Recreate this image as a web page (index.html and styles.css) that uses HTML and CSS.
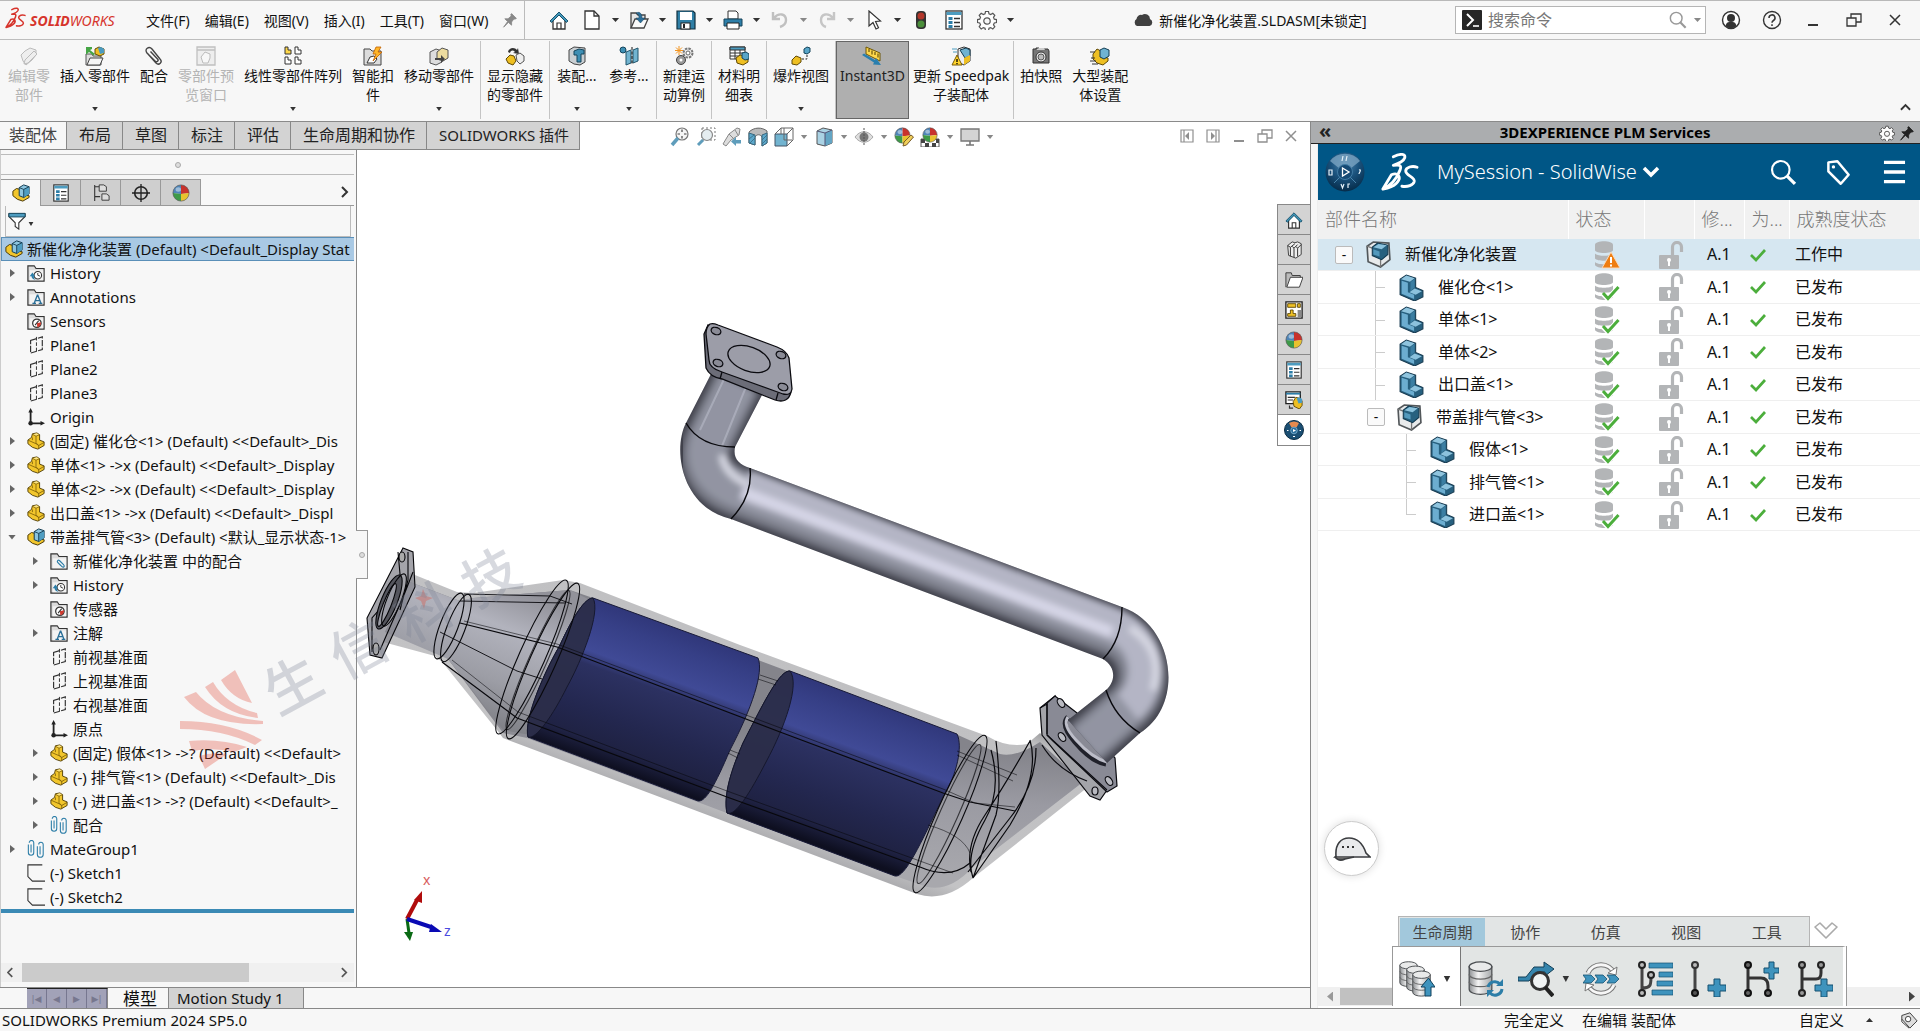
FILE: index.html
```html
<!DOCTYPE html>
<html lang="zh-CN">
<head>
<meta charset="utf-8">
<title>新催化净化装置.SLDASM - SOLIDWORKS</title>
<link rel="stylesheet" href="styles.css">
</head>
<body>
<svg class="defs" aria-hidden="true">
  <defs>
    <radialGradient id="orb" cx=".5" cy=".3" r=".7"><stop offset="0" stop-color="#4f86ae"/><stop offset=".5" stop-color="#1a527d"/><stop offset="1" stop-color="#062c4a"/></radialGradient>
    <linearGradient id="metal" x1="0" x2="1" y1="0" y2="0"><stop offset="0" stop-color="#8e9194"/><stop offset=".4" stop-color="#f4f4f4"/><stop offset="1" stop-color="#a5a8aa"/></linearGradient>
  </defs>
  <symbol id="home" viewBox="0 0 20 20"><path d="M4 10v9h12v-9l-6-6z" fill="#fff" stroke="#333" stroke-width="1.3"/><path d="M8 19v-6h4v6" fill="none" stroke="#333" stroke-width="1.2"/><path d="M1 11l9-9 9 9-1.600 1.400L10 5l-7.400 7.400z" fill="#4397b9" stroke="#0b4763" stroke-width=".9"/></symbol>
  <symbol id="new" viewBox="0 0 20 20"><path d="M3 1h9l5 5v13H3z" fill="#fff" stroke="#333" stroke-width="1.300"/><path d="M12 1v5h5" fill="none" stroke="#333" stroke-width="1.300"/></symbol>
  <symbol id="open" viewBox="0 0 20 20"><path d="M2 18V3h5l2 2h7v4" fill="#e6e6e6" stroke="#444" stroke-width="1.300"/><path d="M2 18L6 9h13l-4 9z" fill="#fafafa" stroke="#444" stroke-width="1.300"/><path d="M7 3c4-2 6 1 6 5h3l-4.500 5L7 8h3c0-3-1-4-3-5z" fill="#2c6e98" stroke="#17415c" stroke-width=".5"/></symbol>
  <symbol id="save" viewBox="0 0 20 20"><path d="M1 1h16l2 2v16H1z" fill="#2f7fa6" stroke="#12303f" stroke-width="1.200"/><rect x="4" y="2" width="12" height="8" fill="#fff"/><rect x="5" y="13" width="9" height="6" fill="#fff" stroke="#222"/><rect x="7" y="14" width="2" height="4" fill="#222"/></symbol>
  <symbol id="print" viewBox="0 0 20 20"><path d="M5 1h8l2 2v6H5z" fill="#fff" stroke="#333"/><path d="M1 9h18v7H1z" fill="#2d7ea8" stroke="#164258"/><path d="M4 13h12v6H4z" fill="#fff" stroke="#222"/></symbol>
  <symbol id="undo" viewBox="0 0 20 20"><path d="M3 2v7h7M4 8c5-6 12-4 12 2 0 4-3 6-6 7" fill="none" stroke="#c0c0c0" stroke-width="2.400"/></symbol>
  <symbol id="redo" viewBox="0 0 20 20"><path d="M17 2v7h-7M16 8c-5-6-12-4-12 2 0 4 2 6 5 7" fill="none" stroke="#c6c6c6" stroke-width="2.400"/></symbol>
  <symbol id="cursor" viewBox="0 0 20 20"><path d="M5 1v15l4-3.500 3 6.500 2.500-1.200-3-6.300 5-.5z" fill="#fff" stroke="#333" stroke-width="1.200"/></symbol>
  <symbol id="traffic" viewBox="0 0 20 20"><rect x="5" y="1" width="10" height="18" rx="4" fill="#333"/><circle cx="10" cy="6" r="3.500" fill="#b3372b"/><circle cx="10" cy="14" r="3.500" fill="#4b8f3b"/></symbol>
  <symbol id="list" viewBox="0 0 20 20"><rect x="2" y="1" width="16" height="18" fill="#fff" stroke="#333" stroke-width="1.300"/><path d="M2.500 2h15v3h-15z" fill="#4d9cc0"/><path d="M4.500 7h4v3h-4zM4.500 11h4v3h-4zM4.500 15h4v3h-4z" fill="#2d7ea8"/><path d="M10 8.500h6M10 12.500h6M10 16.500h6" stroke="#333" stroke-width="1.300"/></symbol>
  <symbol id="gear" viewBox="0 0 20 20"><path d="M8.500 1.500h3l.5 2.300 1.700.8 2.100-1.300 2 2.100-1.300 2 .8 1.800 2.200.4v2.900l-2.200.5-.8 1.800 1.300 2-2 2.100-2.100-1.300-1.700.7-.5 2.300h-3L8 18.300l-1.700-.7-2.100 1.300-2-2.100 1.300-2-.8-1.800-2.200-.5V9.600l2.200-.4.800-1.800-1.300-2 2-2.100 2.100 1.300L8 3.800z" fill="#fdfdfd" stroke="#555" stroke-width="1.200"/><circle cx="10" cy="11" r="3.200" fill="#f7f7f7" stroke="#555" stroke-width="1.200"/></symbol>
  <symbol id="cloud" viewBox="0 0 20 20"><path d="M4 16a4 4 0 0 1-.5-7A4.500 4.500 0 0 1 9 5a5 5 0 0 1 8 4 3.700 3.700 0 0 1-.5 7z" fill="#404040"/></symbol>
  <symbol id="cmd" viewBox="0 0 20 20"><rect width="20" height="20" rx="1" fill="#262626"/><path d="M5 4l6 6-6 6" fill="none" stroke="#fff" stroke-width="2"/><path d="M11 16h6" stroke="#fff" stroke-width="1.600"/></symbol>
  <symbol id="search" viewBox="0 0 20 20"><circle cx="8" cy="8" r="6.500" fill="none" stroke="currentColor" stroke-width="1.600"/><path d="M12.500 12.500L18.500 18.500" stroke="currentColor" stroke-width="2.400"/></symbol>
  <symbol id="user" viewBox="0 0 20 20"><circle cx="10" cy="10" r="8.500" fill="#fff" stroke="#333" stroke-width="1.400"/><circle cx="10" cy="8" r="4" fill="#333"/><path d="M4.500 16c1-4 2.500-4 5.500-4s4.500 0 5.500 4c-3 3-8 3-11 0z" fill="#333"/></symbol>
  <symbol id="help" viewBox="0 0 20 20"><circle cx="10" cy="10" r="8.500" fill="none" stroke="#333" stroke-width="1.400"/><path d="M7 8a3 3 0 1 1 4.500 2.500c-1 .6-1.500 1-1.500 2.300M10 14.300v1.800" fill="none" stroke="#333" stroke-width="1.500"/></symbol>
  <symbol id="min" viewBox="0 0 20 20"><path d="M5 15h10" stroke="currentColor" stroke-width="2"/></symbol>
  <symbol id="restore" viewBox="0 0 20 20"><path d="M3 8h9v8H3zM7 8V4h10v8h-5" fill="none" stroke="currentColor" stroke-width="1.300"/></symbol>
  <symbol id="close" viewBox="0 0 20 20"><path d="M5 5l10 10M15 5L5 15" stroke="currentColor" stroke-width="1.500"/></symbol>
  <symbol id="pin" viewBox="0 0 20 20"><path d="M12 2l6 6-2 1-1-.5-3 4v4L8 13l-6 6 5-7-3.500-3.500h4l4-3.500L11 3z" fill="currentColor" stroke="currentColor"/></symbol>

  <symbol id="part" viewBox="0 0 20 20"><path d="M1 9l4-3 1-4 5-1 3 2v6l5 2v4l-7 4-6-2-5-4z" fill="#f2c62c" stroke="#4c3a05" stroke-width="1"/><path d="M6 2.500l4 2 4-1.500M10 4.500V12l3 3 6-3.500M1 9l9 4 3 2v4M6 6v3" fill="none" stroke="#7a5d07" stroke-width=".9"/><path d="M7 2.500l4-1 2 1.500-3 1z" fill="#fbe486"/></symbol>
  <symbol id="asm" viewBox="0 0 20 20"><path d="M1 8l4-3 4 1v6l10 1v2l-7 4-6-2-5-4z" fill="#f2c62c" stroke="#4c3a05" stroke-width="1.100"/><path d="M8 4l5-3 6 2v8l-6 4-5-2z" fill="#8cc5df" stroke="#143d52" stroke-width="1.100"/><path d="M13 6l6-3v8l-6 4z" fill="#4f9dc1"/><path d="M8 4l5 2v9M13 6l6-3" fill="none" stroke="#143d52" stroke-width="1"/></symbol>
  <symbol id="ghost" viewBox="0 0 20 20"><g fill="#eee" stroke="#bbb"><path d="M2 9l4-4 5-3 6 2v5l-4 5-6 5-3-4z"/><path d="M6 14l9-9 3 3-9 9-4 1z"/></g></symbol>
  <symbol id="insert" viewBox="0 0 20 20"><path d="M1 19V8h6l1 2h8v9z" fill="#ddd" stroke="#555"/><path d="M2 19l3-7h13l-3 7z" fill="#f5f5f5" stroke="#444"/><path d="M1 1h6v2L5 4l5 4-1.500 1.500L4 6 2 8H1z" fill="#45a545"/><path d="M10 3l4-2 5 2v5l-4 2-5-2z" fill="#eebf22" stroke="#614a06"/><path d="M13 2l3-1 3 2v4l-4 1z" fill="#4a9bc1"/></symbol>
  <symbol id="clip" viewBox="0 0 20 20"><path d="M4 8l8 9c3 3 7-1 4-4L8 3C5-.5 0 3 3 7l8 8c2 2 4-.5 2.500-2L6.500 5.500" fill="none" stroke="#444" stroke-width="1.400"/></symbol>
  <symbol id="preview" viewBox="0 0 20 20"><path d="M1 1h18v18H1zM1 4h18" fill="#eee" stroke="#c0c0c0" stroke-width="1.300"/><path d="M5 11l4-5 5 2v4l-2 5H7z" fill="#f7f7f7" stroke="#bbb"/></symbol>
  <symbol id="pattern" viewBox="0 0 20 20"><path d="M2 1h3v3h3v4H2z" fill="#ffd84a" stroke="#333"/><path d="M12 1h3v3h3v4h-6zM2 11h3v3h3v4H2zM12 11h3v3h3v4h-6z" fill="#fff" stroke="#333"/></symbol>
  <symbol id="smart" viewBox="0 0 20 20"><path d="M1 3h6l2 2h9v14H1z" fill="#dcdcdc" stroke="#444"/><path d="M4 17l3-6 4-1 3 3-3 4z" fill="#fff" stroke="#333"/><path d="M13 1h5l-3 5h4l-9 9 3-7h-3z" fill="#ffb629" stroke="#c05f00" stroke-width=".8"/></symbol>
  <symbol id="move" viewBox="0 0 20 20"><path d="M1 6l6-3 6 2v11l-6 3-6-2z" fill="#ddd" stroke="#555"/><path d="M8 6l5-4 6 2v8l-5 3-6-2z" fill="#eddc9f" stroke="#555"/><path d="M6 12h6V9l4 4-4 4v-3H6z" fill="#444"/></symbol>
  <symbol id="showhide" viewBox="0 0 20 20"><path d="M3 6c1-5 7-5 9-2l1-2 1 6-6-1 2-1c-2-2-4-2-5 1z" fill="#333"/><path d="M1 13l4-4 4 1 2 5-3 4-5-2z" fill="#eebf22" stroke="#614a06"/><path d="M11 9l4-2 4 3v5l-4 3-3-3z" fill="#eee" stroke="#555"/></symbol>
  <symbol id="asmfeat" viewBox="0 0 20 20"><path d="M2 4l5-3 11 1v14l-5 3-6-1-5-3z" fill="#c9cfd3" stroke="#444"/><path d="M7 5l5-2 5 1v4h-3v8h-4V9H7z" fill="#3e8fb4" stroke="#15455c"/></symbol>
  <symbol id="refgeo" viewBox="0 0 20 20"><circle cx="4" cy="4" r="3" fill="#3e8fb4" stroke="#15455c"/><path d="M7 6l5-2v13l-5 2zM14 4l5-2v13l-5 2z" fill="#72b4d0" stroke="#20546b"/><path d="M13 1v18" stroke="#111" stroke-dasharray="3 1.500"/></symbol>
  <symbol id="motion" viewBox="0 0 20 20"><path d="M5 0v9M1 4.500h8M2 1.500l6 6M8 1.500l-6 6" stroke="#f3941e"/><circle cx="14" cy="7" r="4.500" fill="#eee" stroke="#777" stroke-width="2" stroke-dasharray="2.500 1"/><circle cx="14" cy="7" r="2" fill="#fff" stroke="#666"/><circle cx="7" cy="14" r="4.500" fill="#999" stroke="#444"/><circle cx="7" cy="14" r="1.500" fill="#fff"/></symbol>
  <symbol id="bom" viewBox="0 0 20 20"><path d="M1 1h15v12H1z" fill="#fff" stroke="#333"/><path d="M1 1h15v3H1z" fill="#4d9cc0" stroke="#333"/><path d="M1 7h15M1 10h15M6 4v9M11 4v9" stroke="#333"/><path d="M7 12l4-3 8 1v6l-5 3-6-2z" fill="#eebf22" stroke="#614a06"/><path d="M13 7l4-1 3 2v5l-4 1-3-2z" fill="#58a5c8" stroke="#15455c"/></symbol>
  <symbol id="explode" viewBox="0 0 20 20"><path d="M1 14l4-4 5 2v4l-4 3-5-1z" fill="#eebf22" stroke="#614a06"/><path d="M13 3l3-2 3 1v4l-3 2-3-1z" fill="#58a5c8" stroke="#15455c"/><path d="M16 9v4h-5" fill="none" stroke="#222" stroke-dasharray="2 1.500"/></symbol>
  <symbol id="instant" viewBox="0 0 20 20"><path d="M4 1l14 6v8L4 8z" fill="#ffd84a" stroke="#6d5708"/><path d="M7 3v3M10 4.500v4M13 6v3M16 7.500v4" stroke="#4a3a00"/><path d="M0 9l2-1.500 11 6.500 1-2 5 7-8-.5 1-2z" fill="#2a7fae"/></symbol>
  <symbol id="speedpak" viewBox="0 0 20 20"><path d="M7 3l6-2 6 2v12l-6 4-6-3z" fill="#eee" stroke="#333"/><path d="M9 4l6-2 4 2v6l-5 2z" fill="#6fb3d2" stroke="#143d52"/><path d="M13 12l6-3v6l-6 4z" fill="#eebf22"/><path d="M1 19l5-10 5 10z" fill="#ffd42c" stroke="#7a5d07"/><path d="M6 13v3M6 17v1.300" stroke="#000" stroke-width="1.300"/><path d="M1 3h5M2 6h4" stroke="#4d9cc0"/></symbol>
  <symbol id="camera" viewBox="0 0 20 20"><path d="M2 3h3V2h3v1h9l1 2v12H2z" fill="#777" stroke="#333"/><path d="M6 3l2-1h5l1 2H6z" fill="#ccc"/><circle cx="10" cy="11" r="5" fill="#eee" stroke="#333"/><circle cx="10" cy="11" r="3" fill="#bbb" stroke="#555"/></symbol>
  <symbol id="large" viewBox="0 0 20 20"><path d="M3 8l4-5 4 2v6l7 1v3l-5 4-6-2-4-4z" fill="#eebf22" stroke="#614a06"/><path d="M10 4l4-2 5 2v6l-5 3-4-2z" fill="#6fb3d2" stroke="#143d52"/><path d="M0 6h5M1 12h4M0 15h6M2 18h6" stroke="#333"/></symbol>

  <symbol id="zoomfit" viewBox="0 0 20 20"><circle cx="12" cy="7" r="6" fill="#f5f5f5" stroke="#777" stroke-width="1.200"/><path d="M12 2.500v2.500M12 9v2.500M7.500 7H10M14 7h2.500" stroke="#444" stroke-width="1.200"/><path d="M8 11l-6 7" stroke="#5f9dbb" stroke-width="3.500"/></symbol>
  <symbol id="zoomarea" viewBox="0 0 20 20"><rect x="6" y="1" width="13" height="12" fill="none" stroke="#777" stroke-dasharray="2 2"/><circle cx="11" cy="8" r="5.500" fill="#e5edf0" stroke="#888" stroke-width="1.200"/><path d="M7 13l-5 5" stroke="#5f9dbb" stroke-width="3"/></symbol>
  <symbol id="prev" viewBox="0 0 20 20"><path d="M1 17l6-10 8-6 3 1-1 6-8 5-5 6z" fill="#ddd" stroke="#888"/><path d="M7 7l4 4M13 3l3 5" stroke="#888"/><path d="M19 16.500h-5V19l-5-4.500 5-4.500v3h5z" fill="#5f9dbb"/></symbol>
  <symbol id="section" viewBox="0 0 20 20"><path d="M1 5c5-5 13-5 18-1v12l-5 3v-9c-2-3-5-3-7 0v8l-6-2z" fill="#bbb" stroke="#666"/><path d="M1 6l6 2v10l-6-2zM14 8l5-2v10l-5 3z" fill="#5da9cc" stroke="#39687f"/><path d="M1 12l5-4M2 16l5-5M14 13l5-5M14 17l5-5" stroke="#39687f" stroke-width=".8"/></symbol>
  <symbol id="orient" viewBox="0 0 20 20"><path d="M1 7h12v12H1z" fill="#72b4d0" stroke="#456"/><path d="M1 7l6-6h12v12l-6 6M13 7l6-6M10 1v12h8M7 1v6" fill="none" stroke="#666"/></symbol>
  <symbol id="cube" viewBox="0 0 20 20"><path d="M3 4l6-3 9 2v13l-7 3-8-2z" fill="#aad2e4" stroke="#555"/><path d="M11 6l7-3v13l-7 3z" fill="#63a5c4"/><path d="M3 4l8 2v13M11 6l7-3" fill="none" stroke="#557"/></symbol>
  <symbol id="eye" viewBox="0 0 20 20"><path d="M1 10c5-7 13-7 18 0-5 7-13 7-18 0z" fill="#ddd" stroke="#aaa"/><circle cx="10" cy="10" r="4.500" fill="#777"/><path d="M10 1v18" stroke="#555" stroke-dasharray="2 1"/></symbol>
  <symbol id="ball" viewBox="0 0 20 20"><g stroke="none"><path d="M10 1a9 9 0 0 0-9 9l9 1z" fill="#4e85b8"/><path d="M10 1a9 9 0 0 1 9 9l-9 1z" fill="#c8322c"/><path d="M1 10a9 9 0 0 0 9 9v-8z" fill="#3d9a48"/><path d="M19 10a9 9 0 0 1-9 9v-8z" fill="#e8c22e"/></g><circle cx="10" cy="10" r="9" fill="none" stroke="#555" stroke-width=".7"/><ellipse cx="7" cy="6" rx="3" ry="2.500" fill="#fff" opacity=".45"/></symbol>
  <symbol id="ballpen" viewBox="0 0 20 20"><use href="#ball" width="17" height="17"/><path d="M9 19l1-4 7-7 2.500 2-7 8z" fill="#efce5a" stroke="#7a5d2a"/></symbol>
  <symbol id="scene" viewBox="0 0 20 20"><path d="M1 12h18v8H1z" fill="#fff" stroke="#555"/><path d="M1 12h4v4H1zM16 12h3v4h-3zM5 16h4v4H5zM12 16h4v4h-4z" fill="#444"/><use href="#ball" x="2" width="16" height="16"/></symbol>
  <symbol id="monitor" viewBox="0 0 20 20"><path d="M1 2h18v12H1z" fill="#d4d4d4" stroke="#777" stroke-width="1.300"/><path d="M10 14v4M6 18h8" stroke="#777" stroke-width="1.600"/></symbol>
  <symbol id="dockl" viewBox="0 0 20 20"><path d="M4 4h12v12H4zM7 4v12" fill="none" stroke="currentColor" stroke-width="1.200"/><path d="M12 6l-4 4 4 4z" fill="currentColor"/></symbol>
  <symbol id="dockr" viewBox="0 0 20 20"><path d="M4 4h12v12H4zM13 4v12" fill="none" stroke="currentColor" stroke-width="1.200"/><path d="M8 6l4 4-4 4z" fill="currentColor"/></symbol>

  <symbol id="fold" viewBox="0 0 20 20"><path d="M1 19V2h7l2 3h9v14z" fill="#dcdcdc" stroke="#333" stroke-width="1.300"/><path d="M3 7h15v11H3z" fill="#f3f3f3"/></symbol>
  <symbol id="history" viewBox="0 0 20 20"><use href="#fold"/><circle cx="12" cy="12.500" r="4.200" fill="#fff" stroke="#333" stroke-width="1.200"/><path d="M12 10v2.500l2.500 1" fill="none" stroke="#333"/><path d="M3 13.500l3-4 3 4H7.500c0 2 1 3 2.500 4-3 0-5-2-5-4z" fill="#2d7ea8"/></symbol>
  <symbol id="annot" viewBox="0 0 20 20"><use href="#fold"/><path d="M6 17h4M13 17h4M8 17l3.500-9h.5l3.500 9M9 14h5.500" fill="none" stroke="#2a6f98" stroke-width="1.500"/></symbol>
  <symbol id="sensor" viewBox="0 0 20 20"><use href="#fold"/><circle cx="11" cy="12.500" r="4.700" fill="#fff" stroke="#333" stroke-width="1.400"/><path d="M11 12.500l4.500-1a4.700 4.700 0 0 1-4 5.500z" fill="#d0392e"/><path d="M9 14.500l4-5" stroke="#333" stroke-width="1.200"/></symbol>
  <symbol id="matefold" viewBox="0 0 20 20"><use href="#fold"/><path d="M8 11l5 5c2 2 4 0 2-2l-4-4c-2-2-4 0-2 2l3 3" fill="none" stroke="#2d7ea8" stroke-width="1.300"/></symbol>
  <symbol id="plane" viewBox="0 0 20 20"><path d="M4 5l13-4v14L4 19z" fill="none" stroke="#333" stroke-width="1.300" stroke-dasharray="7 1.500"/><path d="M10.500 1v18" stroke="#333" stroke-width="1.100" stroke-dasharray="4 2"/></symbol>
  <symbol id="origin" viewBox="0 0 20 20"><path d="M4 3v14h12" fill="none" stroke="#222" stroke-width="2"/><path d="M1.500 5L4 0l2.500 5zM15 14.500l5 2.500-5 2.500z" fill="#222"/><circle cx="4" cy="17" r="2.500" fill="#222"/></symbol>
  <symbol id="mates" viewBox="0 0 20 20"><g fill="none" stroke="#2d7ea8" stroke-width="1.200"><path d="M1.500 5v9a3 3 0 0 0 6 0V3a2.500 2.500 0 0 0-5 0M4.500 5v9"/><path d="M11.500 7v9a3 3 0 0 0 6.500 0V5a2.500 2.500 0 0 0-5 0M14.500 7v9"/></g></symbol>
  <symbol id="sketch" viewBox="0 0 20 20"><path d="M17 1H1v13l5 5h14" fill="none" stroke="#333" stroke-width="1.200"/></symbol>
  <symbol id="config" viewBox="0 0 20 20"><path d="M3 1v18M3 3h6M3 14h6" stroke="#333" stroke-width="1.200"/><path d="M8 1h5l3 2v5H8zM11 11h5l3 2v5h-8z" fill="#ddd" stroke="#333"/></symbol>
  <symbol id="target" viewBox="0 0 20 20"><circle cx="10" cy="10" r="7" fill="none" stroke="#222" stroke-width="1.800"/><path d="M10 0v20M0 10h20" stroke="#222" stroke-width="1.500"/></symbol>
  <symbol id="funnel" viewBox="0 0 20 20"><path d="M1 2h18v3l-7 7v7l-4-3v-4L1 5z" fill="#fff" stroke="#333" stroke-width="1.200"/><path d="M1 1.500h18v4H1z" fill="#4d9cc0" stroke="#14465c"/></symbol>

  <symbol id="books" viewBox="0 0 20 20"><path d="M3 5l5-4 3 1 3-1 4 2v12l-6 4-8-3z" fill="#eee" stroke="#333"/><path d="M3 5l3 2v10M6 7l5-4M8 6l2 2v10M10 8l4-4M12 6l2 2v9M14 8l4-4" fill="none" stroke="#333" stroke-width="1.100"/></symbol>
  <symbol id="folder" viewBox="0 0 20 20"><path d="M1 18V2h6l1 3h9v3" fill="#bbb" stroke="#333"/><path d="M2 18L6 7h14l-4 11z" fill="#fff" stroke="#333"/></symbol>
  <symbol id="palette" viewBox="0 0 20 20"><path d="M1 1h18v18H1z" fill="#fff" stroke="#222" stroke-width="1.500"/><path d="M3 3h9v4H3zM14 3h3v4h-3zM3 17v-3h3v-4h3v4h3v3z" fill="#f1c327" stroke="#5a4506"/><path d="M14 10h4v8h-4z" fill="#888"/></symbol>
  <symbol id="custom" viewBox="0 0 20 20"><path d="M1 1h16v13H1z" fill="#fff" stroke="#222" stroke-width="1.500"/><path d="M1 3h16" stroke="#2d7ea8" stroke-width="2"/><path d="M3 7h8M3 10h6M5 16v3h4" stroke="#333" fill="none" stroke-width="1.300"/><path d="M9 12l3-5 4 1 3 3v5l-3 4-6-3z" fill="#eebf22" stroke="#614a06"/><path d="M13 8l3-1 3 2v4l-4 1z" fill="#4a9bc1"/></symbol>
  <symbol id="compass" viewBox="0 0 40 40"><circle cx="20" cy="20" r="19.500" fill="url(#orb)"/><path d="M5 9A19 19 0 0 1 35 9L25 17q-5-4-10 0z" fill="#7ba4c2" opacity=".8"/><path d="M9 31l6-6M31 31l-6-6" stroke="#4a86ad"/><circle cx="20" cy="20" r="7.500" fill="#164a74" stroke="#3f7aa3"/><path d="M17.500 16l6.500 4-6.500 4z" fill="none" stroke="#fff" stroke-width="1.300"/><path d="M18 4l-1 5M22 4l-1 5M34 18c3-1 0 3 0 4M4 18h3v5H4zM16 32l1.500 4 1.500-4M23 36v-4h2" fill="none" stroke="#e4f0f8" stroke-width="1.200"/></symbol>
  <symbol id="compass-hot" viewBox="0 0 20 20"><circle cx="10" cy="10" r="9.500" fill="#1b4f73" stroke="#0a2c44"/><path d="M5 3q5-3 10 0l-2.500 4.500q-2.500-1.500-5 0z" fill="#e58a4e"/><circle cx="10" cy="10.500" r="3.300" fill="#2c6f9c" stroke="#8fc0dc" stroke-width=".7"/><path d="M9 9l3 1.500L9 12z" fill="#fff"/><path d="M3 10.500h1.500M15.500 10.500H17M9 16.500h2" stroke="#fff"/></symbol>
  <symbol id="ds" viewBox="0 0 40 40"><g fill="none" stroke="currentColor" stroke-width="3" stroke-linejoin="round" stroke-linecap="round"><path d="M13 4c8-4 13-3 12 1-1 3-6 6-12 8 7-1 9 0 7 5-3 8-9 16-18 20l9-15c6-3 12 2 5 9-4 4-9 5-14 6"/><path d="M38 15c-5-2-12 0-12 4 0 5 10 6 9 11-1 4-7 6-13 5"/></g></symbol>
  <symbol id="tag" viewBox="0 0 24 24"><path d="M3 3l8-1 10 12-7 8L3 11z" fill="none" stroke="#fff" stroke-width="2.200" stroke-linejoin="round"/><circle cx="7.500" cy="7" r="1.500" fill="#fff"/></symbol>
  <symbol id="part3d" viewBox="0 0 24 26"><path d="M1 5l6-4 9 3v9l7 3v6l-8 4-14-6z" fill="#27607f" stroke="#16394f"/><path d="M2 5l5-3.500 8 2.700-4.500 3.300z" fill="#8fc4de"/><path d="M11 8l4-3.500V13l-4 3.500z" fill="#3b7ea2"/><path d="M2.500 6.500l6 2v9l6 2.500v4L2.500 19z" fill="#6cadd0"/><path d="M10 17.500l5-3.500 7 2.500-6 3.500z" fill="#8cc2dd"/></symbol>
  <symbol id="asm3d" viewBox="0 0 24 26"><path d="M1 5l6-4 15 1 1 16-9 7-12-5z" fill="#e8eaeb" stroke="#52575a" stroke-width="1.600"/><path d="M1 5l13 5v15" fill="none" stroke="#777" stroke-width="1.200"/><path d="M6 6l5-4 10 2v9l-6 5-9-4z" fill="#27617f" stroke="#123a50"/><path d="M7 6l5-3 8 1-5 4z" fill="#8cc3de"/><path d="M7 8l6 2v5l-6-2z" fill="#5399bc"/></symbol>
  <symbol id="db" viewBox="0 0 26 28"><path d="M1 4c0-5 18-5 18 0v5c0 4-18 4-18 0zM1 12.500c2 3 16 3 18 0v5c-2 3-16 3-18 0zM1 21c2 3 16 3 18 0v3c-2 4-16 4-18 0z" fill="#b3b5b7"/></symbol>
  <symbol id="dbok" viewBox="0 0 26 28"><use href="#db"/><path d="M9 21l5 5L24 14" fill="none" stroke="#fff" stroke-width="5"/><path d="M9 20l5 5.500L24.500 14" fill="none" stroke="#4cae3c" stroke-width="3"/></symbol>
  <symbol id="dbwarn" viewBox="0 0 26 28"><use href="#db"/><path d="M17 11l9 16H8z" fill="#ee7d11" stroke="#f7dcc0"/><path d="M17 16v6M17 23.500v2" stroke="#fff" stroke-width="2"/></symbol>
  <symbol id="lock" viewBox="0 0 26 28"><path d="M14.500 14V6a4.500 4.500 0 0 1 9 0v5" fill="none" stroke="#b3b5b7" stroke-width="3.200"/><rect x="1" y="14" width="20" height="14" rx="1" fill="#b3b5b7"/><circle cx="11" cy="19" r="2" fill="#fff"/><path d="M11 19v6" stroke="#fff" stroke-width="2"/></symbol>
  <symbol id="check" viewBox="0 0 16 14"><path d="M1 7l5 5L15 2" fill="none" stroke="#4cae3c" stroke-width="2.700"/></symbol>

  <symbol id="cyl" viewBox="0 0 26 36"><path d="M1 6v24c0 7 24 7 24 0V6z" fill="url(#metal)" stroke="#4a4d50" stroke-width="1.300"/><ellipse cx="13" cy="6" rx="12" ry="5" fill="#e9eaea" stroke="#4a4d50" stroke-width="1.300"/><path d="M1 14c0 7 24 7 24 0M1 22c0 7 24 7 24 0" fill="none" stroke="#666" stroke-width="1.300"/></symbol>
  <symbol id="t-save" viewBox="0 0 36 36"><use href="#cyl" x="0" y="0" width="19" height="26"/><use href="#cyl" x="7" y="4" width="19" height="27"/><use href="#cyl" x="13" y="9" width="19" height="27"/><path d="M26 35V26h-4l7.500-9 6.500 9h-4v9z" fill="#3e93bd" stroke="#10415c"/></symbol>
  <symbol id="t-refresh" viewBox="0 0 36 36"><use href="#cyl" x="0" y="0" width="25" height="34"/><path d="M20 26a7 7 0 0 1 12-3M34 28a7 7 0 0 1-12 4" fill="none" stroke="#2d7ea8" stroke-width="3"/><path d="M35 18v7h-7zM19 36v-7h7z" fill="#2d7ea8"/></symbol>
  <symbol id="t-find" viewBox="0 0 36 36"><path d="M0 16h8l8-10h10V1l10 7-9 7v-4h-8l-8 9H0z" fill="#3585ad" stroke="#123f57"/><circle cx="22" cy="20" r="8.500" fill="#f0f3f3" stroke="#333" stroke-width="3"/><path d="M27 26l8 9" stroke="#222" stroke-width="4"/></symbol>
  <symbol id="t-cycle" viewBox="0 0 36 36"><g fill="none" stroke="#777" stroke-width="5"><path d="M5 12a14 13 0 0 1 26 0M31 24a14 13 0 0 1-26 0"/></g><g fill="none" stroke="#f7f7f7" stroke-width="3"><path d="M5 12a14 13 0 0 1 26 0M31 24a14 13 0 0 1-26 0"/></g><path d="M34 6l-1 8-8-2zM2 30l1-8 8 2z" fill="#fff" stroke="#777"/><path d="M0 14h8l4 4-4 4H0l3-4zM12 14h8l4 4-4 4h-8l3-4zM24 14h8l4 4-4 4h-8l3-4z" fill="#3e93bd" stroke="#155070" stroke-width=".8"/></symbol>
  <symbol id="t-tree" viewBox="0 0 36 36"><path d="M5 3v30M5 27c9 0 9-3 9-12" fill="none" stroke="#444" stroke-width="3"/><g fill="#bbb" stroke="#222" stroke-width="2"><circle cx="5" cy="4" r="3"/><circle cx="5" cy="32" r="3"/><circle cx="14" cy="14" r="3"/></g><path d="M12 2h24v5H12zM22 11h14v5H22zM20 20h16v5H20zM15 29h21v5H15z" fill="#3e93bd" stroke="#155070" stroke-width=".7"/></symbol>
  <symbol id="t-rev" viewBox="0 0 36 36"><path d="M5 4v28" stroke="#444" stroke-width="3"/><circle cx="5" cy="4" r="3" fill="#bbb" stroke="#333" stroke-width="2"/><circle cx="5" cy="32" r="3" fill="#555" stroke="#111" stroke-width="2"/><path d="M24 18h6v6h6v6h-6v6h-6v-6h-6v-6h6z" fill="#3e93bd" stroke="#155070"/></symbol>
  <symbol id="t-br1" viewBox="0 0 36 36"><path d="M5 4v28M5 17h13q7 0 7 8v7" fill="none" stroke="#333" stroke-width="3"/><g fill="#666" stroke="#111" stroke-width="2"><circle cx="5" cy="4" r="3"/><circle cx="5" cy="32" r="3"/><circle cx="25" cy="32" r="3"/></g><path d="M26 1h5v6h5v5h-5v6h-5v-6h-5V7h5z" fill="#3e93bd" stroke="#155070"/></symbol>
  <symbol id="t-br2" viewBox="0 0 36 36"><path d="M5 4v28M5 18h14q5 0 5-6V4" fill="none" stroke="#333" stroke-width="3"/><g fill="#999" stroke="#222" stroke-width="2"><circle cx="5" cy="4" r="3"/><circle cx="5" cy="32" r="3"/><circle cx="24" cy="4" r="3"/></g><path d="M24 18h6v6h6v6h-6v6h-6v-6h-6v-6h6z" fill="#3e93bd" stroke="#155070"/></symbol>
  <symbol id="tags" viewBox="0 0 20 20"><path d="M2 5l9-3 8 9-8 8L2 9z" fill="#ddd" stroke="#333"/><circle cx="9" cy="9" r="3" fill="#fff" stroke="#333"/><path d="M2 9v3l8 7" fill="none" stroke="#333"/></symbol>
</svg>

<header class="titlebar">
  <div class="brand"><svg class="ds-logo"><use href="#ds"/></svg><span class="wordmark"><b>SOLID</b>WORKS</span></div>
  <nav class="menus">
    <button>文件(F)</button><button>编辑(E)</button><button>视图(V)</button><button>插入(I)</button><button>工具(T)</button><button>窗口(W)</button>
    <svg class="ico pin"><use href="#pin"/></svg>
  </nav>
  <div class="quick">
    <svg class="ico wide"><use href="#home"/></svg>
    <svg class="ico"><use href="#new"/></svg><i class="caret"></i>
    <svg class="ico"><use href="#open"/></svg><i class="caret"></i>
    <svg class="ico"><use href="#save"/></svg><i class="caret"></i>
    <svg class="ico"><use href="#print"/></svg><i class="caret"></i>
    <svg class="ico"><use href="#undo"/></svg><i class="caret dim"></i>
    <svg class="ico"><use href="#redo"/></svg><i class="caret dim"></i>
    <svg class="ico"><use href="#cursor"/></svg><i class="caret"></i>
    <svg class="ico wide"><use href="#traffic"/></svg>
    <svg class="ico wide"><use href="#list"/></svg>
    <svg class="ico"><use href="#gear"/></svg><i class="caret"></i>
  </div>
  <div class="doc-title"><svg class="ico"><use href="#cloud"/></svg><span>新催化净化装置.SLDASM[未锁定]</span></div>
  <label class="search"><svg class="ico"><use href="#cmd"/></svg><input type="text" placeholder="搜索命令" aria-label="搜索命令"><svg class="ico"><use href="#search"/></svg><i class="caret dim"></i></label>
  <div class="win">
    <svg class="ico"><use href="#user"/></svg><svg class="ico"><use href="#help"/></svg><svg class="ico"><use href="#min"/></svg><svg class="ico"><use href="#restore"/></svg><svg class="ico"><use href="#close"/></svg>
  </div>
</header>

<section class="ribbon">
  <div class="group">
    <button class="cmd off" disabled><svg class="ico"><use href="#ghost"/></svg><span>编辑零<br>部件</span></button>
    <button class="cmd"><svg class="ico"><use href="#insert"/></svg><span>插入零部件</span><i class="caret"></i></button>
    <button class="cmd"><svg class="ico"><use href="#clip"/></svg><span>配合</span></button>
    <button class="cmd off" disabled><svg class="ico"><use href="#preview"/></svg><span>零部件预<br>览窗口</span></button>
    <button class="cmd"><svg class="ico"><use href="#pattern"/></svg><span>线性零部件阵列</span><i class="caret"></i></button>
    <button class="cmd"><svg class="ico"><use href="#smart"/></svg><span>智能扣<br>件</span></button>
    <button class="cmd"><svg class="ico"><use href="#move"/></svg><span>移动零部件</span><i class="caret"></i></button>
  </div>
  <div class="group"><button class="cmd"><svg class="ico"><use href="#showhide"/></svg><span>显示隐藏<br>的零部件</span></button></div>
  <div class="group loose">
    <button class="cmd"><svg class="ico"><use href="#asmfeat"/></svg><span>装配...</span><i class="caret"></i></button>
    <button class="cmd"><svg class="ico"><use href="#refgeo"/></svg><span>参考...</span><i class="caret"></i></button>
  </div>
  <div class="group"><button class="cmd"><svg class="ico"><use href="#motion"/></svg><span>新建运<br>动算例</span></button></div>
  <div class="group"><button class="cmd"><svg class="ico"><use href="#bom"/></svg><span>材料明<br>细表</span></button></div>
  <div class="group"><button class="cmd"><svg class="ico"><use href="#explode"/></svg><span>爆炸视图</span><i class="caret"></i></button></div>
  <div class="group tight pressed"><button class="cmd"><svg class="ico"><use href="#instant"/></svg><span>Instant3D</span></button></div>
  <div class="group tight"><button class="cmd"><svg class="ico"><use href="#speedpak"/></svg><span>更新 Speedpak<br>子装配体</span></button></div>
  <div class="group last">
    <button class="cmd"><svg class="ico"><use href="#camera"/></svg><span>拍快照</span></button>
    <button class="cmd"><svg class="ico"><use href="#large"/></svg><span>大型装配<br>体设置</span></button>
  </div>
  <svg class="collapse" viewBox="0 0 12 8"><path d="M1 7l5-5 5 5" fill="none" stroke="#333" stroke-width="2"/></svg>
</section>

<main class="workspace">
  <div class="editor">
    <div class="strip">
      <nav class="tabs">
        <button class="on">装配体</button><button>布局</button><button>草图</button><button>标注</button><button>评估</button><button>生命周期和协作</button><button>SOLIDWORKS 插件</button>
      </nav>
      <div class="headsup">
        <svg class="ico"><use href="#zoomfit"/></svg><svg class="ico"><use href="#zoomarea"/></svg><svg class="ico"><use href="#prev"/></svg><svg class="ico"><use href="#section"/></svg><svg class="ico"><use href="#orient"/></svg><i class="caret dim"></i>
        <svg class="ico"><use href="#cube"/></svg><i class="caret dim"></i>
        <svg class="ico"><use href="#eye"/></svg><i class="caret dim"></i>
        <svg class="ico"><use href="#ballpen"/></svg><svg class="ico"><use href="#scene"/></svg><i class="caret dim"></i>
        <svg class="ico"><use href="#monitor"/></svg><i class="caret dim"></i>
      </div>
      <div class="docwin">
        <svg class="ico"><use href="#dockl"/></svg><svg class="ico"><use href="#dockr"/></svg><svg class="ico"><use href="#min"/></svg><svg class="ico"><use href="#restore"/></svg><svg class="ico"><use href="#close"/></svg>
      </div>
    </div>

    <div class="stage">
      <aside class="features">
        <div class="splitter"><i class="dot"></i></div>
        <div class="ftabs">
          <button class="on"><svg class="ico"><use href="#asm"/></svg></button><button><svg class="ico"><use href="#list"/></svg></button><button><svg class="ico"><use href="#config"/></svg></button><button><svg class="ico"><use href="#target"/></svg></button><button><svg class="ico"><use href="#ball"/></svg></button>
          <svg class="more" viewBox="0 0 8 12"><path d="M1 1l5 5-5 5" fill="none" stroke="#333" stroke-width="2"/></svg>
        </div>
        <div class="filter"><svg class="ico"><use href="#funnel"/></svg><i class="caret"></i></div>
        <ul class="tree">
          <li class="root"><svg class="ico"><use href="#asm"/></svg>新催化净化装置 (Default) &lt;Default_Display Stat</li>
          <li><i class="tw"></i><svg class="ico"><use href="#history"/></svg>History</li>
          <li><i class="tw"></i><svg class="ico"><use href="#annot"/></svg>Annotations</li>
          <li><i class="tw none"></i><svg class="ico"><use href="#sensor"/></svg>Sensors</li>
          <li><i class="tw none"></i><svg class="ico"><use href="#plane"/></svg>Plane1</li>
          <li><i class="tw none"></i><svg class="ico"><use href="#plane"/></svg>Plane2</li>
          <li><i class="tw none"></i><svg class="ico"><use href="#plane"/></svg>Plane3</li>
          <li><i class="tw none"></i><svg class="ico"><use href="#origin"/></svg>Origin</li>
          <li><i class="tw"></i><svg class="ico"><use href="#part"/></svg>(固定) 催化仓&lt;1&gt; (Default) &lt;&lt;Default&gt;_Dis</li>
          <li><i class="tw"></i><svg class="ico"><use href="#part"/></svg>单体&lt;1&gt; -&gt;x (Default) &lt;&lt;Default&gt;_Display</li>
          <li><i class="tw"></i><svg class="ico"><use href="#part"/></svg>单体&lt;2&gt; -&gt;x (Default) &lt;&lt;Default&gt;_Display</li>
          <li><i class="tw"></i><svg class="ico"><use href="#part"/></svg>出口盖&lt;1&gt; -&gt;x (Default) &lt;&lt;Default&gt;_Displ</li>
          <li><i class="tw open"></i><svg class="ico"><use href="#asm"/></svg>带盖排气管&lt;3&gt; (Default) &lt;默认_显示状态-1&gt;</li>
          <li class="sub"><i class="tw"></i><svg class="ico"><use href="#matefold"/></svg>新催化净化装置 中的配合</li>
          <li class="sub"><i class="tw"></i><svg class="ico"><use href="#history"/></svg>History</li>
          <li class="sub"><i class="tw none"></i><svg class="ico"><use href="#sensor"/></svg>传感器</li>
          <li class="sub"><i class="tw"></i><svg class="ico"><use href="#annot"/></svg>注解</li>
          <li class="sub"><i class="tw none"></i><svg class="ico"><use href="#plane"/></svg>前视基准面</li>
          <li class="sub"><i class="tw none"></i><svg class="ico"><use href="#plane"/></svg>上视基准面</li>
          <li class="sub"><i class="tw none"></i><svg class="ico"><use href="#plane"/></svg>右视基准面</li>
          <li class="sub"><i class="tw none"></i><svg class="ico"><use href="#origin"/></svg>原点</li>
          <li class="sub"><i class="tw"></i><svg class="ico"><use href="#part"/></svg>(固定) 假体&lt;1&gt; -&gt;? (Default) &lt;&lt;Default&gt;</li>
          <li class="sub"><i class="tw"></i><svg class="ico"><use href="#part"/></svg>(-) 排气管&lt;1&gt; (Default) &lt;&lt;Default&gt;_Dis</li>
          <li class="sub"><i class="tw"></i><svg class="ico"><use href="#part"/></svg>(-) 进口盖&lt;1&gt; -&gt;? (Default) &lt;&lt;Default&gt;_</li>
          <li class="sub"><i class="tw"></i><svg class="ico"><use href="#mates"/></svg>配合</li>
          <li><i class="tw"></i><svg class="ico"><use href="#mates"/></svg>MateGroup1</li>
          <li><i class="tw none"></i><svg class="ico"><use href="#sketch"/></svg>(-) Sketch1</li>
          <li><i class="tw none"></i><svg class="ico"><use href="#sketch"/></svg>(-) Sketch2</li>
        </ul>
        <div class="hbar"><svg class="arr" viewBox="0 0 8 12"><path d="M6 1L1 6l5 5" fill="none" stroke="#555" stroke-width="2"/></svg><div class="track"><i></i></div><svg class="arr" viewBox="0 0 8 12"><path d="M1 1l5 5-5 5" fill="none" stroke="#555" stroke-width="2"/></svg></div>
      </aside>

      <div class="viewport">
        <svg class="model" viewBox="357 150 953 837">
          <defs>
            <linearGradient id="blue1" gradientUnits="userSpaceOnUse" x1="593" y1="598" x2="541" y2="742"><stop offset="0" stop-color="#30377a"/><stop offset=".12" stop-color="#363f86"/><stop offset=".33" stop-color="#404a96"/><stop offset=".42" stop-color="#2c3161"/><stop offset=".7" stop-color="#23274f"/><stop offset=".88" stop-color="#1f2243"/><stop offset="1" stop-color="#0e0f20"/></linearGradient>
            <linearGradient id="blue2" gradientUnits="userSpaceOnUse" x1="790" y1="671" x2="738" y2="815"><stop offset="0" stop-color="#30377a"/><stop offset=".12" stop-color="#363f86"/><stop offset=".33" stop-color="#404a96"/><stop offset=".42" stop-color="#2c3161"/><stop offset=".7" stop-color="#23274f"/><stop offset=".88" stop-color="#1f2243"/><stop offset="1" stop-color="#0e0f20"/></linearGradient>
            <linearGradient id="cone" gradientUnits="userSpaceOnUse" x1="520" y1="590" x2="470" y2="715"><stop offset="0" stop-color="#92929a"/><stop offset=".3" stop-color="#b2b3bd"/><stop offset=".7" stop-color="#9c9da5"/><stop offset="1" stop-color="#808187"/></linearGradient>
            <linearGradient id="shell" gradientUnits="userSpaceOnUse" x1="780" y1="640" x2="715" y2="820"><stop offset="0" stop-color="#a2a2a4"/><stop offset=".06" stop-color="#c0c0c2"/><stop offset=".9" stop-color="#c3c3c5"/><stop offset="1" stop-color="#adadb0"/></linearGradient>
            <linearGradient id="out" gradientUnits="userSpaceOnUse" x1="1000" y1="750" x2="990" y2="880"><stop offset="0" stop-color="#84848b"/><stop offset=".4" stop-color="#9a9aa2"/><stop offset="1" stop-color="#a8a8ad"/></linearGradient>
            <filter id="soft" x="-5%" y="-5%" width="110%" height="110%"><feGaussianBlur stdDeviation="3"/></filter>
            <clipPath id="tube"><path d="M711 374L686 423C672 450 682 508 731 519L1103 659C1116 667 1116 681 1106 690L1068 720 1107 763 1140 733C1185 705 1175 625 1122 607L750 468C738 464 733 458 735 447L762 395z"/></clipPath>
          </defs>
          <path d="M410 573L457 592 473 593 563 580 580 583 740 645 987 736Q1007 748 1027 744L1040 733 1093 783 973 878Q945 903 917 894L503 738 497 730 443 663 435 656 383 642z" fill="url(#shell)"/>
          <path d="M410 582L460 601 473 598 570 590 593 598 958 735 1000 754Q1015 758 1040 742L1083 782 973 867Q950 892 927 887L895 876 527 738 503 733 448 659 437 648 385 632z" fill="url(#out)"/>
          <path d="M410 582L460 601 473 598 570 590 590 600 530 735 503 730 448 659 385 632z" fill="url(#cone)"/>
          <path d="M593 598L758 658C764 672 752 708 730 750 715 785 706 802 698 801L528 737C524 722 540 680 560 645 577 608 587 598 593 598z" fill="url(#blue1)" stroke="#191b38"/>
          <path d="M593 598C601 612 582 660 567 687 553 715 536 740 528 737 524 722 540 680 560 645 577 608 587 598 593 598z" fill="#2c2e4a" stroke="#15172b" opacity=".95"/>
          <path d="M790 671L957 734C963 746 957 775 943 797 920 845 905 878 895 876L727 813C723 795 732 768 743 743 765 700 780 670 790 671z" fill="url(#blue2)" stroke="#191b38"/>
          <path d="M790 671C800 684 785 727 766 762 750 793 735 817 727 813 723 795 732 768 743 743 765 700 780 670 790 671z" fill="#2c2e4a" stroke="#15172b" opacity=".95"/>
          <g fill="none" stroke="#08080c" stroke-width="1.200">
            <path d="M460 623L557 647 780 732 943 793 970 802 1015 811M442 662L517 718 727 797 920 867Q950 880 970 863"/>
            <path d="M464 594L550 596 572 604M440 632L517 671 542 679M460 601L565 603" stroke-width=".9"/>
            <path d="M464 621L557 644 943 789 975 803 1015 807M452 660L518 712 727 791 953 873M760 675l18 6M758 679l18 6M957 751l60 24M957 755l56 26M928 825q35 10 42 28M730 750l10 4M728 753l10 5" opacity=".6" stroke-width=".9"/>
            <g stroke-width="1.100"><ellipse cx="449" cy="626" rx="9" ry="35" transform="rotate(21 449 626)"/><ellipse cx="456" cy="628" rx="9" ry="36" transform="rotate(21 456 628)"/><ellipse cx="532" cy="657" rx="13" ry="84" transform="rotate(24 532 657)"/><ellipse cx="543" cy="661" rx="13" ry="85" transform="rotate(24 543 661)"/><ellipse cx="538" cy="660" rx="9" ry="76" transform="rotate(24 538 660)" opacity=".7"/><ellipse cx="950" cy="814" rx="13" ry="86" transform="rotate(24 950 814)"/><ellipse cx="949" cy="814" rx="9" ry="76" transform="rotate(24 949 814)" opacity=".7"/></g>
            <path d="M996 741Q1002 790 996 815L973 878 1010 825Q1040 775 1030 740M991 750Q1002 790 985 820 965 855 973 878M1036 748Q1036 785 1010 818L968 872M1030 741Q1005 785 985 815 965 845 971 872"/>
          </g>
          <g stroke="#050508" stroke-width="1.100">
            <path d="M403 548L413 552 415 587 382 658 370 655 367 618z" fill="#85868d" fill-opacity=".75"/>
            <path d="M398 552L401 585 372 618 372 652M413 572L404 595 380 650M408 552v28l-8 30" fill="none"/>
            <ellipse cx="389" cy="602" rx="8" ry="29" transform="rotate(22 389 602)" fill="#55565e"/><ellipse cx="387" cy="605" rx="4" ry="23" transform="rotate(22 387 605)" fill="#9b9ca5"/><ellipse cx="394" cy="600" rx="7" ry="28" transform="rotate(22 394 600)" fill="none"/>
            <ellipse cx="402" cy="557" rx="3" ry="5" fill="#aaa"/><ellipse cx="376" cy="649" rx="3" ry="6" fill="#aaa"/>
          </g>
          <g stroke="#0b0b10" stroke-width="1.200"><path d="M1040 708L1055 696 1053 740 1107 790 1100 800 1090 796 1042 735z" fill="#a3a4a9"/><path d="M1047 703L1055 696 1077 713 1115 758 1117 786 1107 792 1053 741 1047 735z" fill="#898a95"/><path d="M1047 735L1107 790M1040 708l7-4v30M1042 745q15 25 45 36" fill="none"/><ellipse cx="1061" cy="703" rx="3" ry="5" transform="rotate(-35 1061 703)" fill="#b9bac1"/><ellipse cx="1062" cy="737" rx="3" ry="5" transform="rotate(-35 1062 737)" fill="#b9bac1"/><ellipse cx="1109" cy="781" rx="3" ry="5" transform="rotate(-35 1109 781)" fill="#b9bac1"/><ellipse cx="1095" cy="791" rx="3" ry="4" fill="#b9bac1"/></g>
          <path d="M1068 717Q1060 725 1075 742 1092 762 1106 764" fill="none" stroke="#20212a" stroke-width="5"/><path d="M1068 717Q1062 725 1076 740 1092 758 1107 762" fill="none" stroke="#bcbdc8" stroke-width="3"/>
          <g clip-path="url(#tube)">
            <path d="M680 360h500v420H680z" fill="#41424c"/>
            <g fill="none" stroke-linejoin="round" filter="url(#soft)">
              <path d="M738 382L711 436C697 462 712 484 741 493L1113 632C1148 647 1152 690 1123 711L1085 744" stroke="#777985" stroke-width="48"/>
              <path d="M738 382L711 436C699 462 714 482 742 491L1114 630C1149 645 1153 690 1123 711L1085 744" stroke="#9294a2" stroke-width="36"/>
              <path d="M745 485L1114 624C1151 641 1154 686 1128 707" stroke="#b4b5c5" stroke-width="32"/>
              <path d="M742 492L1112 632" stroke="#d5d5e6" stroke-width="11"/>
              <path d="M722 455Q725 475 748 484M1130 628Q1165 650 1153 690" stroke="#d7d8e3" stroke-width="7"/>
            </g>
            <path d="M752 372L722 446M726 375L700 430" stroke="#b8bac8" stroke-width="2" opacity=".6"/>
          </g>
          <path d="M686 423Q700 447 735 447M750 468Q753 496 731 519M1122 607Q1122 640 1103 659M1106 690Q1115 718 1140 733" fill="none" stroke="#08080c" stroke-width="1.400"/>
          <g stroke="#0b0b10" stroke-width="1.300">
            <path d="M708 325L704 334 706 368Q710 377 722 379L775 400Q788 404 791 392L785 370z" fill="#6c6d78"/>
            <path d="M710 324Q713 323 718 325L777 347Q787 351 789 358L792 389Q791 396 783 394L722 372Q709 368 709 360L706 334Q706 327 710 324z" fill="#9c9da8"/>
            <ellipse cx="749" cy="359" rx="22" ry="12" transform="rotate(20 749 359)" fill="#9c9da8"/>
            <g fill="#8a8b96"><ellipse cx="716" cy="331" rx="5" ry="3.500" transform="rotate(20 716 331)"/><ellipse cx="781" cy="355" rx="5" ry="3.500" transform="rotate(20 781 355)"/><ellipse cx="783" cy="387" rx="5" ry="3.500" transform="rotate(20 783 387)"/><ellipse cx="718" cy="363" rx="5" ry="3.500" transform="rotate(20 718 363)"/></g>
            <path d="M722 372l-2 7M778 393l-2 7" fill="none"/>
          </g>
          <g class="triad">
            <path d="M407 919l2 14" stroke="#0a6a14" stroke-width="3"/><path d="M404 932h9l-3 9z" fill="#0a6a14"/>
            <path d="M407 919l10-19" stroke="#b00c0c" stroke-width="4"/><path d="M422 891l-8 9 8 3z" fill="#b00c0c"/>
            <path d="M407 919l24 8" stroke="#0a0ab4" stroke-width="4"/><path d="M442 932l-13 0 2-8z" fill="#0a0ab4"/>
            <text x="423" y="885" fill="#d85c5c">x</text><text x="444" y="936" fill="#4a4ae0">z</text>
          </g>
        </svg>
        <div class="flyout"><i class="dot"></i></div>
        <nav class="panes">
          <button><svg class="ico"><use href="#home"/></svg></button><button><svg class="ico"><use href="#books"/></svg></button><button><svg class="ico"><use href="#folder"/></svg></button><button><svg class="ico"><use href="#palette"/></svg></button><button><svg class="ico"><use href="#ball"/></svg></button><button><svg class="ico"><use href="#list"/></svg></button><button><svg class="ico"><use href="#custom"/></svg></button><button class="on"><svg class="ico"><use href="#compass-hot"/></svg></button>
        </nav>
      </div>
      <svg class="watermark" viewBox="170 530 370 240">
        <g fill="#e2412f" opacity=".3">
          <path d="M221 680l14-10 17 33q-20-4-31-23zM205 687l8-5q14 24 44 31l1 5q-36-4-53-31zM184 697l12-5q20 25 67 29v3q-57 2-79-27zM180 721q48 0 82 19l-7 5q-32-16-75-16zM189 741q30-3 58 6l-13 5q-20-5-42-1zM199 756q12-4 28-2l-22 15z"/>
          <path d="M423 589l3 7 7 2-7 3-2 8-3-8-6-3 6-2z"/>
        </g>
        <g transform="translate(293 685) rotate(-28.500)" fill="#7d8496" opacity=".3"><text x="-28 47 122 197" y="20">生信科技</text></g>
      </svg>
    </div>

    <div class="sheets">
      <div class="nav"><button>|◀</button><button>◀</button><button>▶</button><button>▶|</button></div>
      <button class="sheet on">模型</button><button class="sheet">Motion Study 1</button>
    </div>
  </div>

  <aside class="plm">
    <header class="plm-head"><span class="chev">«</span><strong>3DEXPERIENCE PLM Services</strong><svg class="ico"><use href="#gear"/></svg><svg class="ico"><use href="#pin"/></svg></header>
    <div class="plm-body">
      <div class="session">
        <svg class="orb"><use href="#compass"/></svg><svg class="dsw"><use href="#ds"/></svg>
        <a class="name" href="#">MySession - SolidWise</a><svg class="down" viewBox="0 0 18 12"><path d="M2 2l7 7 7-7" fill="none" stroke="#fff" stroke-width="3.500"/></svg>
        <svg class="act first"><use href="#search"/></svg><svg class="act"><use href="#tag"/></svg><svg class="act" viewBox="0 0 24 24"><path d="M1 2h22M1 12h22M1 22h22" stroke="#fff" stroke-width="3.500"/></svg>
      </div>
      <table class="parts">
        <colgroup><col class="c1"><col class="c2"><col class="c3"><col class="c4"><col class="c5"><col></colgroup>
        <thead><tr><th>部件名称</th><th>状态</th><th></th><th>修...</th><th>为...</th><th>成熟度状态</th></tr></thead>
        <tbody>
          <tr class="sel"><td><div class="cell"><button class="tog">-</button><svg class="p3"><use href="#asm3d"/></svg>新催化净化装置</div></td><td><svg class="st"><use href="#dbwarn"/></svg></td><td><svg class="st"><use href="#lock"/></svg></td><td>A.1</td><td><svg class="ck"><use href="#check"/></svg></td><td>工作中</td></tr>
          <tr><td><div class="cell l2"><i class="br"></i><svg class="p3"><use href="#part3d"/></svg>催化仓&lt;1&gt;</div></td><td><svg class="st"><use href="#dbok"/></svg></td><td><svg class="st"><use href="#lock"/></svg></td><td>A.1</td><td><svg class="ck"><use href="#check"/></svg></td><td>已发布</td></tr>
          <tr><td><div class="cell l2"><i class="br"></i><svg class="p3"><use href="#part3d"/></svg>单体&lt;1&gt;</div></td><td><svg class="st"><use href="#dbok"/></svg></td><td><svg class="st"><use href="#lock"/></svg></td><td>A.1</td><td><svg class="ck"><use href="#check"/></svg></td><td>已发布</td></tr>
          <tr><td><div class="cell l2"><i class="br"></i><svg class="p3"><use href="#part3d"/></svg>单体&lt;2&gt;</div></td><td><svg class="st"><use href="#dbok"/></svg></td><td><svg class="st"><use href="#lock"/></svg></td><td>A.1</td><td><svg class="ck"><use href="#check"/></svg></td><td>已发布</td></tr>
          <tr><td><div class="cell l2"><i class="br"></i><svg class="p3"><use href="#part3d"/></svg>出口盖&lt;1&gt;</div></td><td><svg class="st"><use href="#dbok"/></svg></td><td><svg class="st"><use href="#lock"/></svg></td><td>A.1</td><td><svg class="ck"><use href="#check"/></svg></td><td>已发布</td></tr>
          <tr><td><div class="cell sub"><button class="tog">-</button><svg class="p3"><use href="#asm3d"/></svg>带盖排气管&lt;3&gt;</div></td><td><svg class="st"><use href="#dbok"/></svg></td><td><svg class="st"><use href="#lock"/></svg></td><td>A.1</td><td><svg class="ck"><use href="#check"/></svg></td><td>已发布</td></tr>
          <tr><td><div class="cell l3"><i class="br"></i><svg class="p3"><use href="#part3d"/></svg>假体&lt;1&gt;</div></td><td><svg class="st"><use href="#dbok"/></svg></td><td><svg class="st"><use href="#lock"/></svg></td><td>A.1</td><td><svg class="ck"><use href="#check"/></svg></td><td>已发布</td></tr>
          <tr><td><div class="cell l3"><i class="br"></i><svg class="p3"><use href="#part3d"/></svg>排气管&lt;1&gt;</div></td><td><svg class="st"><use href="#dbok"/></svg></td><td><svg class="st"><use href="#lock"/></svg></td><td>A.1</td><td><svg class="ck"><use href="#check"/></svg></td><td>已发布</td></tr>
          <tr><td><div class="cell l3"><i class="br end"></i><svg class="p3"><use href="#part3d"/></svg>进口盖&lt;1&gt;</div></td><td><svg class="st"><use href="#dbok"/></svg></td><td><svg class="st"><use href="#lock"/></svg></td><td>A.1</td><td><svg class="ck"><use href="#check"/></svg></td><td>已发布</td></tr>
        </tbody>
      </table>
      <button class="assistant"><svg viewBox="0 0 38 26"><path d="M3 20C2 8 8 2 16 2c9 0 14 6 17 15l4 4H2z" fill="#e9eaec" stroke="#3b3d40" stroke-width="1.600"/><path d="M2 21q4 5 10 2l9-2" fill="#666" stroke="#3b3d40" stroke-width="1.500"/><path d="M9 11h2M14 11h2M19 11h2" stroke="#333" stroke-width="2"/></svg></button>
      <div class="pscroll"><i class="al"></i><i class="thumb"></i><i class="ar"></i></div>
      <div class="actionbar">
        <div class="atabs"><nav><button class="on">生命周期</button><button>协作</button><button>仿真</button><button>视图</button><button>工具</button></nav><svg class="heart" viewBox="0 0 24 18"><path d="M6 1L1 5l11 11L23 5l-5-4-6 6z" fill="#fff" stroke="#aaa" stroke-width="1.600" stroke-linejoin="round"/></svg></div>
        <div class="tools">
          <div class="tool on"><svg><use href="#t-save"/></svg><i class="caret big"></i></div>
          <div class="tool"><svg><use href="#t-refresh"/></svg></div>
          <div class="tool split"><svg><use href="#t-find"/></svg><i class="caret big"></i></div>
          <div class="tool"><svg><use href="#t-cycle"/></svg></div>
          <div class="tool"><svg><use href="#t-tree"/></svg></div>
          <div class="tool"><svg><use href="#t-rev"/></svg></div>
          <div class="tool"><svg><use href="#t-br1"/></svg></div>
          <div class="tool"><svg><use href="#t-br2"/></svg></div>
        </div>
      </div>
    </div>
  </aside>
</main>

<footer class="status"><span class="ver">SOLIDWORKS Premium 2024 SP5.0</span><span>完全定义</span><span>在编辑 装配体</span><span class="unit">自定义</span><i class="up"></i><svg class="ico"><use href="#tags"/></svg></footer>
</body>
</html>
```
FILE: styles.css
```css
* { box-sizing: border-box; }
body {
  margin: 0;
  min-height: 100vh;
  display: flex;
  flex-direction: column;
  background: #f7f7f7;
  color: #111;
  font: 14px/19px "Noto Sans", "Noto Sans CJK SC", sans-serif;
  overflow: hidden;
}
button { font: inherit; color: inherit; background: none; border: 0; padding: 0; margin: 0; white-space: nowrap; }
svg { flex: none; display: block; }
.defs { position: absolute; width: 0; height: 0; }
.ico { width: 20px; height: 20px; }
.caret { flex: none; width: 9px; height: 4px; background: #333; clip-path: polygon(10% 0, 90% 0, 50% 100%); }
.caret.dim { background: #888; }
.caret.big { height: 6px; }

/* title bar */
.titlebar { display: flex; align-items: center; height: 40px; border-top: 1px solid #b9b9b9; border-bottom: 1px solid #bdbdbd; }
.brand { display: flex; align-items: center; gap: 4px; width: 146px; padding-left: 5px; color: #d6342c; }
.ds-logo { width: 21px; height: 24px; margin-top: -4px; }
.wordmark { font-size: 14px; font-style: italic; }
.menus { display: flex; align-items: center; gap: 15px; height: 38px; width: 379px; border-right: 1px solid #bbb; }
.menus .pin { width: 16px; height: 16px; margin-left: -1px; color: #888; }
.quick { display: flex; align-items: center; gap: 9px; padding-left: 24px; }
.quick .wide { margin-right: 4px; }
.doc-title { flex: 1; display: flex; align-items: center; justify-content: center; gap: 6px; padding-left: 30px; white-space: nowrap; }
.search { display: flex; align-items: center; width: 251px; height: 28px; padding: 0 3px 0 6px; border: 1px solid #b5b5b5; background: #fff; color: #999; }
.search input { flex: 1; min-width: 0; border: 0; outline: 0; padding: 0 6px; background: none; font: inherit; font-size: 16px; }
.search input::placeholder { color: #777; opacity: 1; }
.search .ico:last-of-type { width: 18px; height: 18px; margin-right: 6px; }
.win { display: flex; gap: 21px; padding: 0 15px; color: #333; }

/* ribbon */
.ribbon { display: flex; height: 82px; border-bottom: 1px solid #8a8a8a; padding-top: 1px; }
.group { display: flex; height: 78px; padding: 0 1px; border-right: 1px solid #c4c4c4; }
.group:first-child { padding-left: 3px; }
.group.last { border: 0; }
.cmd { position: relative; display: flex; flex-direction: column; align-items: center; padding: 5px 5px 0; text-align: center; }
.cmd .caret { position: absolute; bottom: 8px; width: 7px; }
.cmd.off { color: #b4b4b4; }
.loose .cmd { width: 52px; }
.tight .cmd { padding-left: 3px; padding-right: 3px; }
.pressed { background: #afafaf; border: 1px solid #666; padding: 0; color: #222; }
.pressed .cmd { padding-top: 4px; }
.collapse { width: 11px; height: 8px; margin: 62px 9px 0 auto; }

/* workspace */
.workspace { flex: 1; display: grid; grid-template-columns: minmax(0, 1fr) 610px; min-height: 0; }
.editor { display: flex; flex-direction: column; min-width: 0; }
.strip { display: flex; height: 28px; background: #fff; }
.tabs { display: flex; font-size: 16px; border-bottom: 1px solid #888; }
.tabs button { padding: 0 11px 0 12px; background: #d3d3d3; border-right: 1px solid #888; color: #222; }
.tabs button.on { background: #f7f7f7; padding: 0 9px; color: #444; }
.tabs button:last-child { font-size: 15px; padding-right: 10px; }
.headsup { display: flex; align-items: center; gap: 6px; margin: 2px auto 0 90px; }
.headsup .caret { width: 8px; }
.docwin { display: flex; align-items: center; gap: 6px; padding-right: 9px; color: #8f8f8f; }
.stage { position: relative; flex: 1; display: flex; min-height: 0; }

/* feature tree */
.features { display: flex; flex-direction: column; width: 357px; padding-right: 2px; border-right: 1px solid #8a8a8a; border-left: 1px solid #ccc; }
.splitter { display: flex; align-items: center; justify-content: center; height: 21px; margin-top: 4px; border-top: 1px solid #bbb; border-bottom: 1px solid #bbb; }
.dot { width: 6px; height: 6px; border: 1px solid #aaa; border-radius: 50%; background: #ddd; }
.ftabs { display: flex; align-items: stretch; height: 27px; margin-top: 4px; border-bottom: 1px solid #999; }
.ftabs button { display: flex; align-items: center; justify-content: center; width: 40px; background: #cfcfcf; border: 1px solid #999; border-width: 1px 1px 0 0; }
.ftabs button.on { background: #f7f7f7; height: 27px; }
.ftabs .ico { width: 18px; height: 18px; }
.more { width: 8px; height: 12px; margin: 7px 5px 0 auto; }
.filter { display: flex; align-items: center; gap: 2px; height: 31px; margin: 0 3px 0 4px; padding-left: 2px; border: 1px solid #bbb; border-top: 0; }
.filter .ico { width: 18px; height: 18px; }
.filter .caret { width: 6px; margin-top: 6px; }
.tree { list-style: none; margin: 0; padding: 0; font-size: 15px; border-bottom: 4px solid #3b8ab5; overflow: hidden; }
.tree li { display: flex; align-items: center; height: 24px; white-space: nowrap; }
.tree .ico { width: 18px; height: 18px; margin: 0 5px 0 10px; }
.tree .root { background: #a9c9e4; border: 1px solid #5a8fb8; border-right: 0; }
.tree .root .ico { margin: 0 4px 0 3px; }
.tree .sub { padding-left: 23px; }
.tw { flex: none; width: 5px; height: 8px; margin: 0 2px 0 9px; background: #666; clip-path: polygon(0 0, 100% 50%, 0 100%); }
.tw.none { background: none; }
.tw.open { width: 8px; height: 5px; margin: 0 1px 0 7px; clip-path: polygon(0 0, 100% 0, 50% 100%); }
.hbar { display: flex; align-items: center; gap: 8px; height: 19px; margin: auto 0 5px; padding: 0 6px; background: #f0f0f0; }
.hbar .arr { width: 7px; height: 11px; }
.track { flex: 1; height: 19px; }
.track i { display: block; width: 73%; height: 19px; background: #cbcbcb; }

/* model view */
.viewport { position: relative; flex: 1; min-width: 0; background: #fff; }
.model { position: absolute; inset: 0; width: 100%; height: 100%; }
.triad text { font: 14px "Noto Sans", sans-serif; }
.flyout { position: absolute; left: -1px; top: 380px; display: flex; align-items: center; justify-content: center; width: 12px; height: 49px; border: 1px solid #999; border-left: 0; background: #f7f7f7; }
.panes { position: absolute; right: 0; top: 54px; display: flex; flex-direction: column; width: 33px; border: 1px solid #888; border-right: 0; }
.panes button { display: flex; align-items: center; justify-content: center; height: 30px; background: #d3d3d3; border-bottom: 1px solid #888; }
.panes button.on { background: #fff; border: 0; }
.panes .ico { width: 18px; height: 18px; }
.panes .on .ico { width: 20px; height: 20px; }
.watermark { position: absolute; left: 170px; top: 380px; width: 370px; height: 240px; pointer-events: none; }
.watermark text { font: 500 56px "Noto Sans CJK SC", sans-serif; }

/* sheet tabs */
.sheets { display: flex; height: 21px; padding-left: 27px; border-top: 1px solid #888; }
.nav { display: flex; border-top: 1px solid #222; border-right: 1px solid #888; }
.nav button { width: 20px; background: #a2a2b8; border-right: 1px solid #777790; color: #77778e; font: 9px/18px "DejaVu Sans", sans-serif; }
.sheet { padding: 0 12px 0 8px; font-size: 15px; background: #d3d3d3; border-right: 1px solid #888; width: 135px; text-align: left; }
.sheet.on { width: 61px; padding: 0 0 0 4px; text-align: center; background: #f7f7f7; font-size: 17px; }

/* PLM pane */
.plm { display: flex; flex-direction: column; border-left: 1px solid #888; min-width: 0; }
.plm-head { display: flex; align-items: center; gap: 4px; height: 22px; padding: 0 5px 0 8px; background: #abadaf; border-bottom: 1px solid #222; color: #222; }
.plm-head strong { flex: 1; text-align: center; font-size: 15px; color: #000; font-weight: 700; }
.plm-head .ico { width: 16px; height: 16px; }
.chev { font-size: 20px; font-weight: 700; line-height: 16px; margin-top: -4px; }
.plm-body { position: relative; flex: 1; margin-left: 6px; background: #fff; border-left: 1px solid #eee; }
.session { display: flex; align-items: center; height: 56px; padding: 0 14px 0 7px; background: #005686; color: #fff; }
.orb { width: 40px; height: 40px; }
.dsw { width: 38px; height: 38px; margin: 0 18px 0 16px; }
.name { color: #fff; text-decoration: none; font-size: 20px; line-height: 26px; font-weight: 300; }
.down { width: 18px; height: 12px; margin-left: 5px; }
.act { width: 23px; height: 24px; margin-left: 31px; }
.act.first { width: 27px; height: 27px; margin-left: auto; }
.act.first + .act { margin-left: 28px; width: 27px; height: 27px; }
.parts { width: 100%; border-collapse: collapse; table-layout: fixed; font-size: 16px; }
.c1 { width: 250px; } .c2 { width: 76px; } .c3 { width: 50px; } .c4 { width: 50px; } .c5 { width: 45px; }
.parts th { height: 39px; padding: 0 0 0 7px; text-align: left; font-weight: 300; font-size: 18px; color: #777; background: #f1f1f1; border-right: 1px solid #fff; white-space: nowrap; }
.parts td { padding: 0; border-bottom: 1px solid #efefef; white-space: nowrap; }
.parts td:nth-child(2) { padding-left: 26px; }
.parts td:nth-child(3) { padding-left: 14px; }
.parts td:nth-child(4) { padding-left: 13px; }
.parts td:nth-child(5) { padding-left: 6px; }
.parts td:nth-child(6) { padding-left: 6px; }
.parts .sel { background: #d6e7f1; }
.cell { display: flex; align-items: center; height: 31px; padding-left: 17px; }
.parts tr:nth-child(even) .cell { height: 32px; }
.tog { width: 18px; height: 18px; margin-right: 13px; border: 1px solid #bbb; border-radius: 2px; background: #fafafa; font-size: 14px; line-height: 14px; }
.p3 { width: 25px; height: 27px; margin-right: 14px; }
.cell.l2 { padding-left: 57px; }
.cell.sub { padding-left: 49px; }
.cell.l3 { padding-left: 88px; }
.br { position: relative; align-self: stretch; width: 24px; border-left: 1px solid #ccc; }
.br::after { content: ""; position: absolute; left: 0; top: 50%; width: 9px; border-top: 1px solid #ccc; }
.br.end { align-self: flex-start; height: 16px; }
.br.end::after { top: 15px; }
.sub .tog { margin-right: 12px; }
.st { width: 26px; height: 28px; }
.ck { width: 16px; height: 14px; }
.assistant { position: absolute; left: 6px; bottom: 132px; display: flex; align-items: center; justify-content: center; width: 55px; height: 55px; border: 1px solid #ccc; border-radius: 50%; background: #fff; box-shadow: 0 0 8px #ddd; }
.assistant svg { width: 38px; height: 26px; }
.pscroll { position: absolute; left: 0; right: 0; bottom: 2px; display: flex; align-items: center; height: 19px; padding: 0 5px 0 9px; background: #f0f0f0; }
.al { width: 6px; height: 10px; background: #999; clip-path: polygon(100% 0, 0 50%, 100% 100%); }
.ar { width: 6px; height: 10px; margin-left: auto; background: #444; clip-path: polygon(0 0, 100% 50%, 0 100%); }
.thumb { width: 300px; height: 17px; margin-left: 7px; background: #c1c1c1; }
.actionbar { position: absolute; left: 74px; bottom: 2px; width: 454px; }
.atabs { display: flex; align-items: center; gap: 4px; padding-left: 6px; }
.atabs nav { display: flex; width: 412px; height: 30px; padding: 1px 2px 0 1px; border: 1px solid #b5b5b5; border-bottom: 0; background: #e2e5e5; }
.atabs button { flex: 1; font-size: 15px; color: #444; }
.atabs button.on { flex: none; width: 85px; background: #a2c8dc; }
.heart { width: 24px; height: 18px; }
.tools { display: flex; height: 60px; border: 1px solid #999; border-right: 3px solid #fff; border-bottom: 0; background: #e2e5e4; box-shadow: 1px 0 0 #999; }
.tool { display: flex; align-items: center; justify-content: center; flex: 1; gap: 8px; padding: 5px 3px 0 0; }
.tool svg { width: 36px; height: 36px; }
.tool.on { flex: none; width: 68px; background: #fff; border-right: 1px solid #777; }
.tool.split { flex: none; width: 62px; }
.tool.on .caret, .tool.split .caret { width: 8px; }

/* status bar */
.status { display: flex; align-items: center; height: 23px; padding: 0 2px; border-top: 1px solid #888; font-size: 15px; white-space: nowrap; }
.status .ver { margin-right: auto; }
.status span + span { margin-left: 18px; }
.status .unit { margin-left: 123px; }
.status .up { width: 7px; height: 4px; margin: 0 27px 0 22px; background: #333; clip-path: polygon(50% 0, 100% 100%, 0 100%); }
.status .ico { width: 18px; height: 18px; }
```
